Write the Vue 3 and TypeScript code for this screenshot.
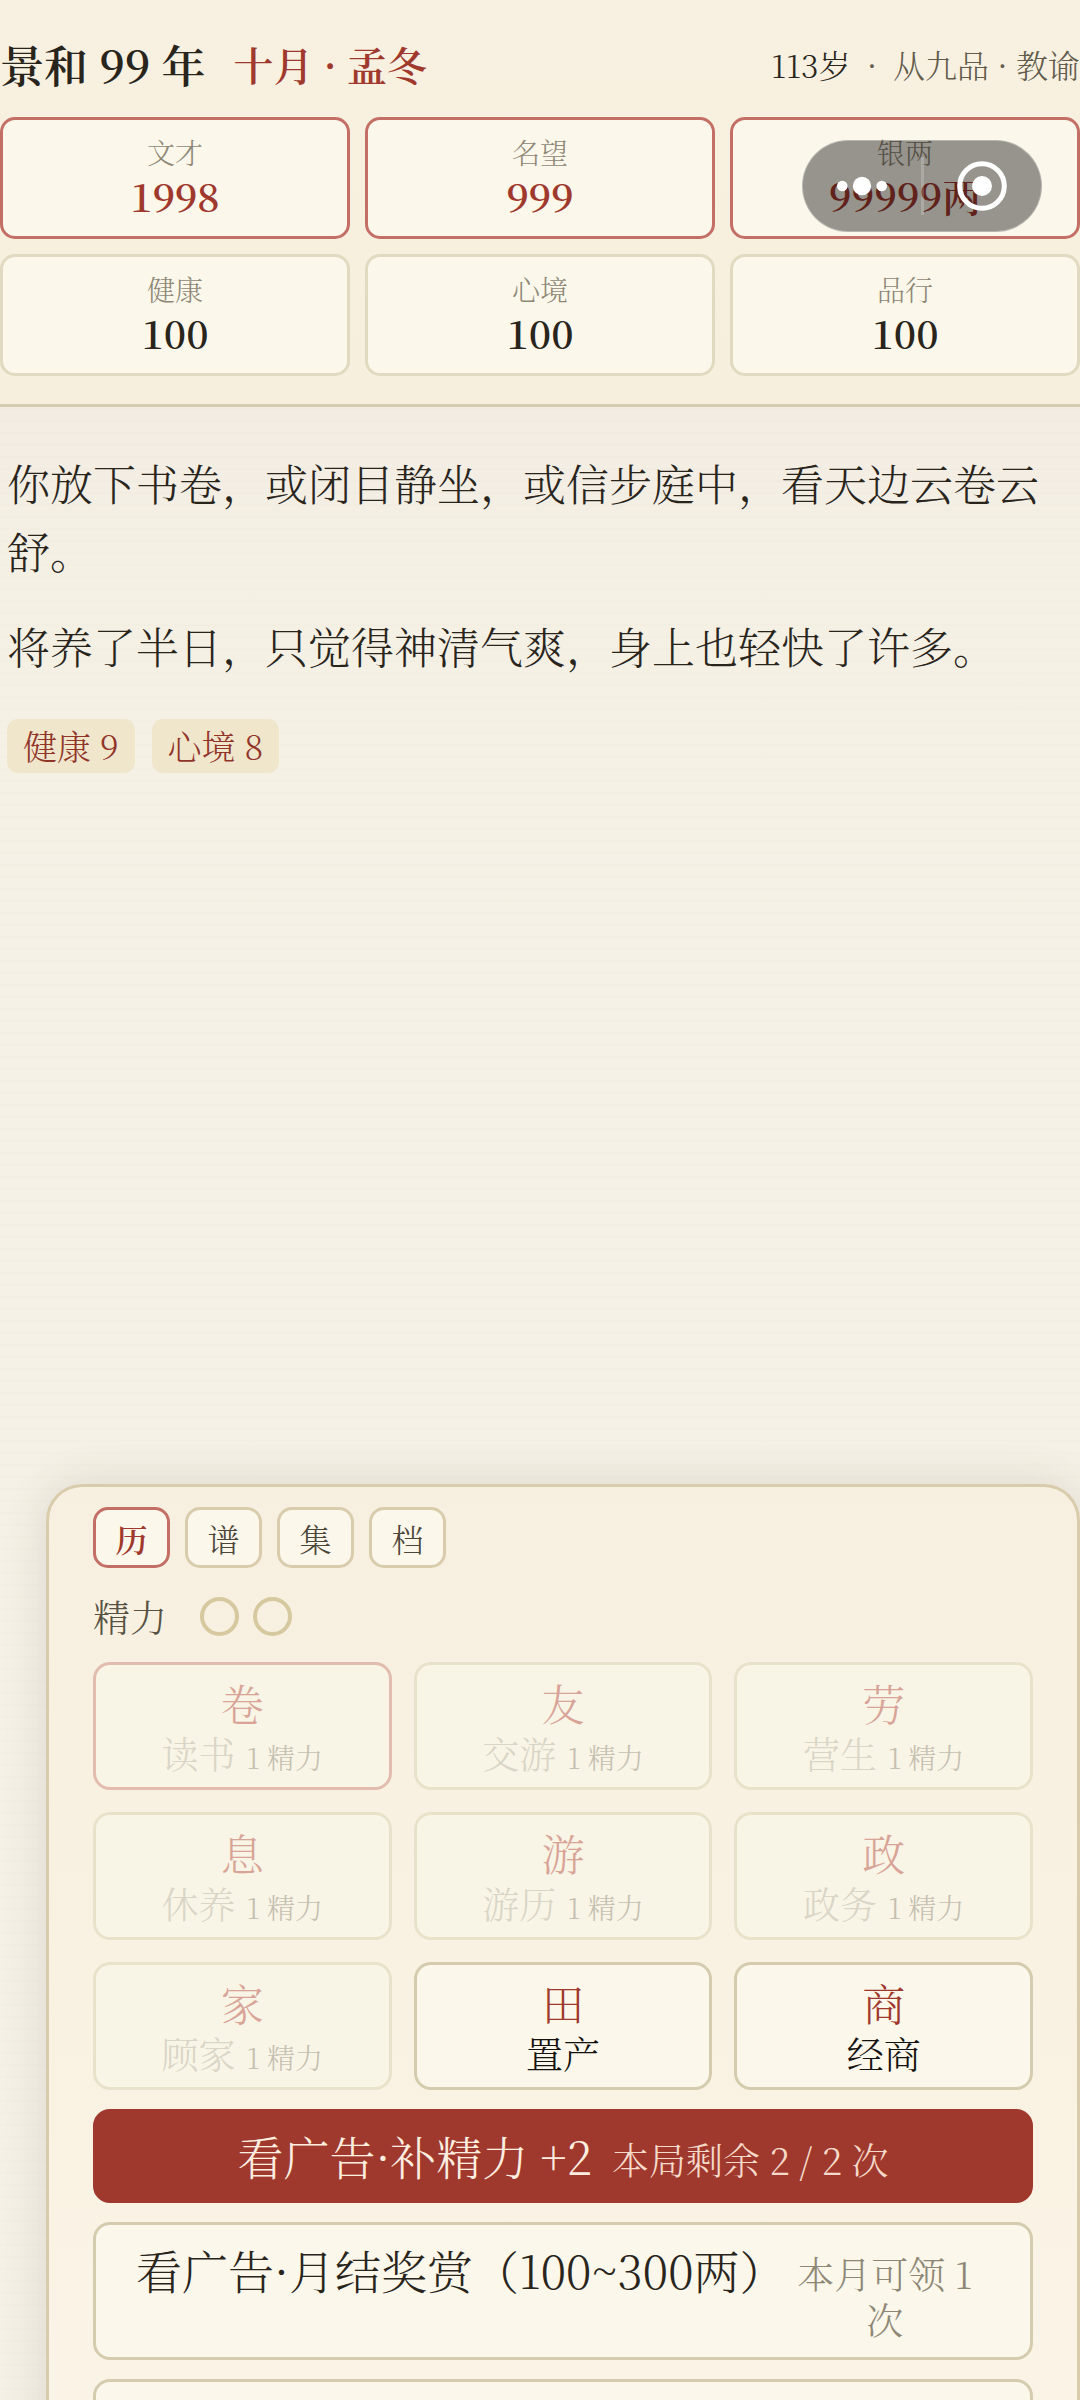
<script setup lang="ts">
interface Stat {
  label: string
  value: string
  hot?: boolean
}

interface Action {
  icon: string
  name: string
  cost?: string
  hot?: boolean
}

const stats: Stat[] = [
  { label: '文才', value: '1998', hot: true },
  { label: '名望', value: '999', hot: true },
  { label: '银两', value: '99999两', hot: true },
  { label: '健康', value: '100' },
  { label: '心境', value: '100' },
  { label: '品行', value: '100' },
]

const paragraphs: string[] = [
  '你放下书卷，或闭目静坐，或信步庭中，看天边云卷云舒。',
  '将养了半日，只觉得神清气爽，身上也轻快了许多。',
]

const gains: string[] = ['健康 9', '心境 8']

const tabs: string[] = ['历', '谱', '集', '档']

const actions: Action[] = [
  { icon: '卷', name: '读书', cost: '1 精力', hot: true },
  { icon: '友', name: '交游', cost: '1 精力' },
  { icon: '劳', name: '营生', cost: '1 精力' },
  { icon: '息', name: '休养', cost: '1 精力' },
  { icon: '游', name: '游历', cost: '1 精力' },
  { icon: '政', name: '政务', cost: '1 精力' },
  { icon: '家', name: '顾家', cost: '1 精力' },
  { icon: '田', name: '置产' },
  { icon: '商', name: '经商' },
]
</script>

<template>
  <div class="game">
    <header class="top">
      <div class="headline">
        <h1 class="year">景和 99 年</h1>
        <span class="month">十月 · 孟冬</span>
        <div class="rank">
          <span class="age">113岁</span>
          <span>·</span>
          <span>从九品 · 教谕</span>
        </div>
      </div>
      <div class="stats">
        <div v-for="s in stats" :key="s.label" class="stat" :class="{ hot: s.hot }">
          <span class="stat-label">{{ s.label }}</span>
          <span class="stat-value">{{ s.value }}</span>
        </div>
      </div>
      <!-- Mini-program capsule floating above the page -->
      <div class="capsule">
        <button class="capsule-btn" type="button">
          <svg width="50" height="20" viewBox="0 0 50 20" fill="#fff">
            <circle cx="5.3" cy="10" r="5.3" />
            <circle cx="25" cy="10" r="9.2" />
            <circle cx="44.7" cy="10" r="5.3" />
          </svg>
        </button>
        <span class="capsule-line"></span>
        <button class="capsule-btn" type="button">
          <svg width="50" height="50" viewBox="0 0 50 50">
            <circle cx="25" cy="25" r="22.3" fill="none" stroke="#fff" stroke-width="5" />
            <circle cx="25" cy="25" r="10" fill="#fff" />
          </svg>
        </button>
      </div>
    </header>

    <main class="story">
      <p v-for="p in paragraphs" :key="p" class="para">{{ p }}</p>
      <div class="gains">
        <span v-for="g in gains" :key="g" class="gain">{{ g }}</span>
      </div>
    </main>

    <section class="panel">
      <nav class="tabs">
        <button v-for="(t, i) in tabs" :key="t" type="button" class="tab" :class="{ active: i === 0 }">{{ t }}</button>
      </nav>
      <div class="energy">
        <span>精力</span>
        <span class="pips"><i class="pip"></i><i class="pip"></i></span>
      </div>
      <div class="actions">
        <button
          v-for="a in actions"
          :key="a.name"
          type="button"
          class="action"
          :class="{ hot: a.hot }"
          :disabled="!!a.cost"
        >
          <span class="action-icon">{{ a.icon }}</span>
          <span class="action-text">
            <span>{{ a.name }}</span>
            <small v-if="a.cost" class="cost">{{ a.cost }}</small>
          </span>
        </button>
      </div>
      <div class="offers">
        <button type="button" class="offer primary">
          <span class="offer-name">看广告·补精力 +2</span>
          <span class="offer-note">本局剩余 2 / 2 次</span>
        </button>
        <button type="button" class="offer">
          <span class="offer-name">看广告·月结奖赏（100~300两）</span>
          <span class="offer-note">本月可领 1 次</span>
        </button>
        <button type="button" class="offer"></button>
      </div>
    </section>
  </div>
</template>

<style>
body {
  margin: 0;
  background: #f5f0e5;
}
</style>

<style scoped>
.game {
  box-sizing: border-box;
  display: flex;
  flex-direction: column;
  height: 100vh;
  overflow: hidden;
  font-family: 'Noto Serif CJK SC', 'Liberation Serif', 'Noto Sans CJK SC', serif;
  font-weight: 300;
  color: #29251c;
  background:
    repeating-linear-gradient(to bottom, rgba(120, 100, 60, 0.012) 0 2px, transparent 2px 12px),
    linear-gradient(to bottom, #f2ece3 400px, #f5f0e4 560px, #f6f1e6 1000px, #f5f0e6);
}

button {
  box-sizing: border-box;
  margin: 0;
  padding: 0;
  font: inherit;
  color: inherit;
}

.top {
  position: relative;
  padding: 34px 0 28px;
  border-bottom: 3px solid #d5cbae;
  background: linear-gradient(to bottom, #f8f1e1, #f6efdd);
}

.headline {
  display: flex;
  align-items: center;
  height: 60px;
  margin-bottom: 23px;
}

.year {
  margin: 0;
  font-size: 44px;
  font-weight: 600;
  line-height: 60px;
}

.month {
  margin-left: 28px;
  font-size: 40px;
  font-weight: 600;
  line-height: 60px;
  color: #a0392d;
}

.rank {
  display: flex;
  gap: 16px;
  margin-left: auto;
  font-size: 32px;
  line-height: 60px;
  color: #635c4d;
}

.age {
  color: #29251c;
}

.stats {
  display: grid;
  grid-template-columns: repeat(3, 1fr);
  gap: 15px;
}

.stat {
  display: flex;
  flex-direction: column;
  align-items: center;
  padding: 14px 0 16px;
  border: 3px solid #e1d9c0;
  border-radius: 15px;
  background: #fbf7ea;
}

.stat.hot {
  border-color: #c46f65;
}

.stat-label {
  font-size: 28px;
  line-height: 36px;
  color: #8e8776;
}

.stat-value {
  font-size: 39px;
  font-weight: 600;
  line-height: 50px;
}

.stat.hot .stat-value {
  color: #a0392d;
}

.capsule {
  position: absolute;
  top: 140px;
  right: 38px;
  box-sizing: border-box;
  display: flex;
  align-items: center;
  width: 240px;
  height: 92px;
  border: 1px solid rgba(255, 255, 255, 0.3);
  border-radius: 46px;
  background: rgba(0, 0, 0, 0.4);
}

.capsule-btn {
  display: flex;
  flex: 1;
  align-items: center;
  justify-content: center;
  border: 0;
  background: none;
}

.capsule-line {
  width: 3px;
  height: 58px;
  background: rgba(255, 255, 255, 0.2);
}

.story {
  flex: 1;
  padding: 42px 7px 0;
}

.para {
  margin: 0 0 27px;
  font-size: 43px;
  line-height: 68px;
}

.gains {
  display: flex;
  gap: 17px;
  margin-top: 39px;
}

.gain {
  padding: 0 16px;
  border-radius: 11px;
  font-size: 34px;
  line-height: 54px;
  color: #923529;
  background: #efe6cc;
}

.panel {
  flex: none;
  margin: 0 0 -73px 46px;
  padding: 20px 44px 0;
  border: 3px solid #d8ccac;
  border-bottom: 0;
  border-radius: 36px 36px 0 0;
  background: linear-gradient(to bottom, #f7f0e0, #f9f2e2 50%, #faf4e7);
  box-shadow: 0 0 44px rgba(70, 70, 50, 0.14);
}

.tabs {
  display: flex;
  gap: 15px;
}

.tab {
  width: 77px;
  height: 61px;
  border: 3px solid #d8ccac;
  border-radius: 15px;
  font-size: 32px;
  line-height: 54px;
  color: #4c4639;
  background: #fbf7ea;
}

.tab.active {
  border-color: #c46f65;
  font-weight: 600;
  color: #a0392d;
}

.energy {
  display: flex;
  align-items: center;
  gap: 33px;
  height: 40px;
  margin: 28px 0 26px;
  font-size: 37px;
  line-height: 40px;
  color: #585244;
}

.pips {
  display: flex;
  gap: 14px;
}

.pip {
  box-sizing: border-box;
  width: 39px;
  height: 39px;
  border: 4px solid #d6c99f;
  border-radius: 50%;
}

.actions {
  display: grid;
  grid-template-columns: repeat(3, 1fr);
  gap: 22px;
}

.action {
  display: flex;
  flex-direction: column;
  align-items: center;
  padding: 13px 0 9px;
  border: 3px solid #d5cbae;
  border-radius: 17px;
  color: #14120e;
  background: #fbf7ea;
}

.action:disabled {
  border-color: #e9e2cb;
  color: #d9d5c7;
  background: #f9f5e6;
}

.action.hot:disabled {
  border-color: #e2bcae;
}

.action-icon {
  font-size: 43px;
  line-height: 50px;
  color: #a0392d;
}

.action:disabled .action-icon {
  color: #d8a497;
}

.action-text {
  display: flex;
  align-items: baseline;
  gap: 11px;
  font-size: 37px;
  line-height: 50px;
}

.cost {
  font-size: 28px;
  line-height: 36px;
  color: #c5c0b1;
}

.offers {
  display: flex;
  flex-direction: column;
  gap: 19px;
  margin-top: 19px;
}

.offer {
  display: flex;
  align-items: baseline;
  justify-content: center;
  gap: 10px;
  min-height: 94px;
  padding: 17px 56px 15px 40px;
  border: 3px solid #d5cbae;
  border-radius: 17px;
  background: #fbf7ea;
}

.offer.primary {
  gap: 20px;
  padding: 16px 40px 18px;
  border-color: #a0392d;
  color: #fdeee0;
  background: #a0392d;
}

.offer-name {
  flex: none;
  font-size: 46px;
  line-height: 54px;
}

.offer-note {
  font-size: 37px;
  line-height: 46px;
  color: #8e8776;
}

.primary .offer-note {
  color: #f5d9ca;
}
</style>
